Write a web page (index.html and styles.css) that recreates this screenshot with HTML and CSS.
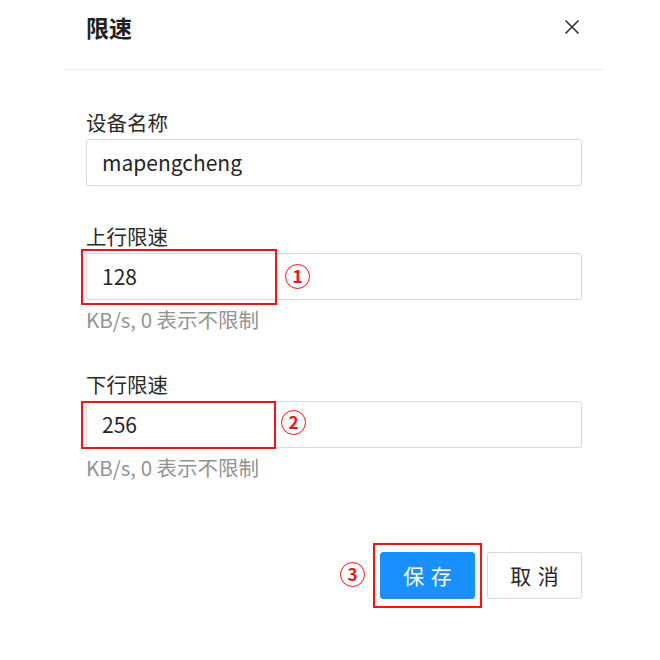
FILE: index.html
```html
<!DOCTYPE html>
<html lang="zh-CN">
<head>
<meta charset="utf-8">
<title>限速</title>
<link rel="stylesheet" href="styles.css">
</head>
<body>
<div class="modal">
  <div class="modal-header">
    <div class="modal-title">限速</div>
    <button class="close" aria-label="关闭">
      <svg width="16" height="16" viewBox="0 0 16 16"><path d="M1.5 1.5 L14.5 14.5 M14.5 1.5 L1.5 14.5" stroke="#333" stroke-width="1.6" fill="none"/></svg>
    </button>
  </div>
  <div class="modal-body">
    <div class="field">
      <label class="label">设备名称</label>
      <div class="input-wrap">
        <div class="input">mapengcheng</div>
      </div>
    </div>
    <div class="field">
      <label class="label">上行限速</label>
      <div class="input-wrap">
        <div class="input">128</div>
        <span class="mark mark-1"></span>
        <span class="num num-1">1</span>
      </div>
      <div class="help">KB/s, 0 表示不限制</div>
    </div>
    <div class="field">
      <label class="label">下行限速</label>
      <div class="input-wrap">
        <div class="input">256</div>
        <span class="mark mark-2"></span>
        <span class="num num-2">2</span>
      </div>
      <div class="help">KB/s, 0 表示不限制</div>
    </div>
  </div>
  <div class="modal-footer">
    <div class="save-wrap">
      <span class="num num-3">3</span>
      <button class="btn btn-primary"><span>保存</span></button>
      <span class="mark mark-3"></span>
    </div>
    <button class="btn"><span>取消</span></button>
  </div>
</div>
</body>
</html>
```

FILE: styles.css
```css
* { box-sizing: border-box; }
html, body {
  margin: 0;
  padding: 0;
  background: #fff;
}
body {
  font-family: "Noto Sans CJK SC", "Noto Sans", sans-serif;
  color: #333;
  width: 660px;
  height: 660px;
  overflow: hidden;
}
.modal {
  margin-left: 64px;
  width: 539px;
}
.modal-header {
  height: 70px;
  border-bottom: 1px solid #ececec;
  display: flex;
  justify-content: space-between;
  align-items: flex-start;
  padding: 13px 23px 0 22px;
}
.modal-title {
  font-size: 23px;
  font-weight: 700;
  line-height: 28px;
  color: #222;
}
.close {
  border: 0;
  background: none;
  padding: 0;
  margin-top: 6px;
  width: 16px;
  height: 16px;
  display: block;
  cursor: pointer;
}
.close svg { display: block; }
.modal-body {
  padding: 39px 21px 0 22px;
}
.field {
  margin-bottom: 37px;
}
.field + .field { margin-bottom: 39px; }
.label {
  display: block;
  font-size: 20.5px;
  line-height: 26px;
  color: #2b2b2b;
  margin-bottom: 4px;
}
.input-wrap {
  position: relative;
}
.input {
  height: 47px;
  border: 1px solid #d9d9d9;
  border-radius: 3px;
  padding: 0 15px;
  font-size: 21px;
  line-height: 45px;
  color: #262626;
  background: #fff;
}
.help {
  margin-top: 6px;
  font-size: 20.5px;
  line-height: 26px;
  color: #939393;
}
.mark {
  position: absolute;
  z-index: 2;
  border: 2px solid #ff1010;
  pointer-events: none;
}
.mark-1 { left: -5px; top: -4px; width: 196px; height: 56px; }
.mark-2 { left: -5px; top: 0; width: 195px; height: 48px; }
.num {
  position: absolute;
  width: 25px;
  height: 25px;
  border: 1.5px solid #ff1010;
  border-radius: 50%;
  color: #ff1010;
  font-size: 17px;
  font-weight: 700;
  line-height: 22px;
  text-align: center;
}
.num-1 { left: 199px; top: 11px; }
.num-2 { left: 195px; top: 9px; }
.modal-footer {
  display: flex;
  justify-content: flex-end;
  gap: 12px;
  padding: 33px 21px 0 22px;
}
.save-wrap {
  position: relative;
}
.mark-3 { left: -7px; top: -9px; width: 109px; height: 65px; border-color: #ff1010; }
.num-3 { left: -40px; top: 10px; }
.btn {
  width: 95px;
  height: 47px;
  border: 1px solid #d9d9d9;
  border-radius: 3px;
  background: #fff;
  color: #262626;
  font-family: "Noto Sans CJK SC", "Noto Sans", sans-serif;
  font-size: 21px;
  line-height: 45px;
  padding: 0;
  display: block;
}
.btn span {
  letter-spacing: 0.3em;
  margin-right: -0.3em;
}
.btn-primary {
  background: #1890ff;
  border-color: #1890ff;
  color: #fff;
}
```
